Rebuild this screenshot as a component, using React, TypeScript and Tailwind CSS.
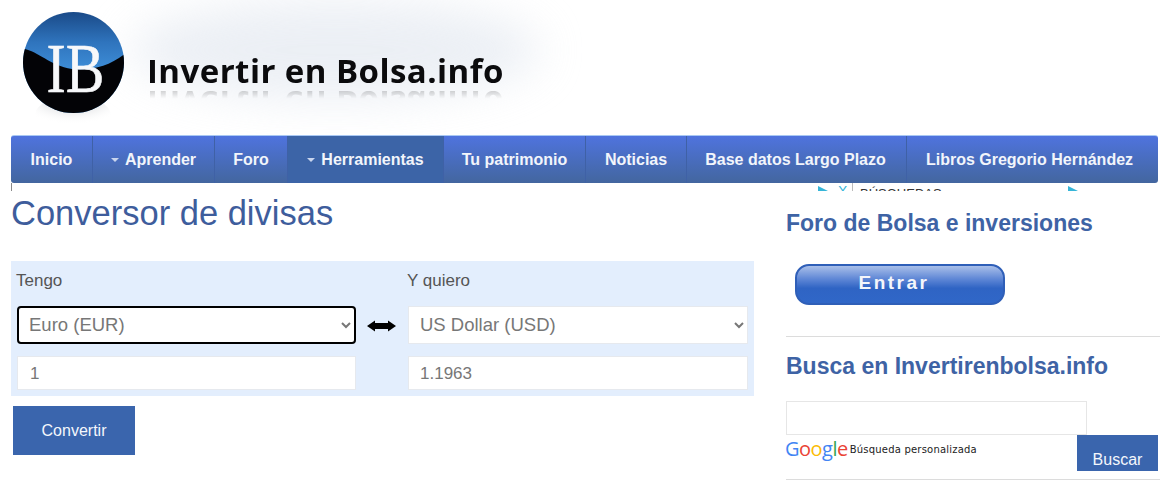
const navItems = [
  { label: "Inicio", width: "w-[82px]" },
  { label: "Aprender", width: "w-[122px]", caret: true },
  { label: "Foro", width: "w-[73px]" },
  { label: "Herramientas", width: "w-[156px]", caret: true, active: true },
  { label: "Tu patrimonio", width: "w-[142px]" },
  { label: "Noticias", width: "w-[101px]" },
  { label: "Base datos Largo Plazo", width: "w-[220px] pr-[2px]" },
  { label: "Libros Gregorio Hernández", width: "w-[251px] pr-[6px]" },
];

function LogoBall() {
  return (
    <svg width="130" height="135" viewBox="0 0 130 135" className="shrink-0">
      <defs>
        <linearGradient id="ballTop" x1="0" y1="0" x2="0" y2="1">
          <stop offset="0" stopColor="#1a4a88" />
          <stop offset="0.3" stopColor="#2f74bd" />
          <stop offset="0.6" stopColor="#3f90da" />
          <stop offset="1" stopColor="#3b86cf" />
        </linearGradient>
        <radialGradient id="ballShadow" cx="0.5" cy="0" r="0.75">
          <stop offset="0" stopColor="#9a9ea5" />
          <stop offset="1" stopColor="#ffffff" stopOpacity="0" />
        </radialGradient>
        <clipPath id="ballClip">
          <circle cx="73.5" cy="62.5" r="50.5" />
        </clipPath>
      </defs>
      <ellipse cx="73" cy="115" rx="38" ry="19" fill="url(#ballShadow)" />
      <circle cx="73.5" cy="62.5" r="50.5" fill="url(#ballTop)" />
      <g clipPath="url(#ballClip)">
        <path d="M20 48 C38 50 48 65 72 69 C92 71 110 66 126 53 L126 116 L20 116 Z" fill="#030306" />
      </g>
      <text
        transform="translate(75.5 92) scale(0.84 1)"
        textAnchor="middle"
        fontFamily="'Liberation Serif', serif"
        fontSize="69"
        fill="#f7f8fa"
        stroke="#f7f8fa"
        strokeWidth="0.6"
      >
        IB
      </text>
    </svg>
  );
}

function SwapArrow() {
  return (
    <svg width="29" height="12" viewBox="0 0 29 12" className="shrink-0">
      <path d="M0 6 L8 0.5 V3 H21 V0.5 L29 6 L21 11.5 V9 H8 V11.5 Z" fill="#000" />
    </svg>
  );
}

export default function App() {
  return (
    <div className="w-[1160px] h-[486px] overflow-hidden bg-white font-['Liberation_Sans',Arial,sans-serif]">
      {/* cabecera */}
      <header className="relative h-[135px] flex items-start overflow-hidden">
        <div className="absolute left-[130px] top-[0px] w-[410px] h-[100px] rounded-[50%] bg-[#dfe5ee] opacity-60 blur-[22px]" />
        <div className="relative">
          <LogoBall />
        </div>
        <span className="relative ml-[17px] mt-[49px] font-['Open_Sans',sans-serif] font-bold text-[33px] leading-[44px] tracking-[0.45px] text-[#0b0b0d] [-webkit-box-reflect:below_-12px_linear-gradient(transparent_60%,rgba(0,0,0,0.4))]">
          Invertir en Bolsa.info
        </span>
      </header>

      {/* menu */}
      <nav className="ml-[11px] w-[1147px] h-[48px] flex rounded-[3px] overflow-hidden border-t border-[#a9c8f3] bg-gradient-to-b from-[#4f73de] to-[#43669f]">
        {navItems.map((item) => (
          <a
            key={item.label}
            className={`${item.width} flex items-center justify-center gap-[6px] border-r border-[#3f61a6] text-[16px] font-bold text-[#f2f5fb] last:border-r-0 ${
              item.active ? "bg-[#3c64a7]" : ""
            }`}
          >
            {item.caret && <span className="w-0 h-0 border-x-[4px] border-x-transparent border-t-[4px] border-t-[#c9d5ee]" />}
            {item.label}
          </a>
        ))}
      </nav>

      {/* restos del anuncio */}
      <div className="relative ml-[11px] h-[8px] border-l border-[#8a8a8a] overflow-hidden">
        <span className="absolute left-[806px] top-[3px] w-0 h-0 border-y-[5px] border-y-transparent border-l-[10px] border-l-[#36b5d8]" />
        <span className="absolute left-[826px] top-[0px] text-[14px] leading-[16px] text-[#36b5d8]">X</span>
        <span className="absolute left-[840px] top-0 h-full border-l border-[#bbb]" />
        <span className="absolute left-[848px] top-[3px] text-[13px] leading-[15px] text-[#333]">BÚSQUEDAS</span>
        <span className="absolute left-[1056px] top-[3px] w-0 h-0 border-y-[5px] border-y-transparent border-l-[10px] border-l-[#36b5d8]" />
      </div>

      <div className="flex pl-[11px]">
        {/* conversor */}
        <main className="w-[743px] shrink-0">
          <h1 className="text-[34.5px] leading-[42px] mt-[1px] text-[#3e5d9c]">Conversor de divisas</h1>
          <div className="mt-[27px] h-[135px] bg-[#e3eefd] pl-[6px] pr-[6px] pt-[9px] flex">
            <div className="w-[339px]">
              <label className="block -ml-[1px] text-[17px] leading-[22px] text-[#555]">Tengo</label>
              <select
                defaultValue="EUR"
                className="mt-[14px] w-full h-[38px] pl-[6px] pr-[2px] pb-[2px] bg-white border-2 border-black rounded-[4px] text-[18.5px] text-[#777]"
              >
                <option value="EUR">Euro (EUR)</option>
                <option value="USD">US Dollar (USD)</option>
              </select>
              <input
                defaultValue="1"
                className="mt-[12px] w-full h-[34px] px-[12px] pt-[2px] bg-white border border-[#e6e9ee] text-[17px] text-[#777]"
              />
            </div>
            <div className="w-[52px] pt-[50px] pl-[11px]">
              <SwapArrow />
            </div>
            <div className="w-[340px]">
              <label className="block -ml-[1px] text-[17px] leading-[22px] text-[#555]">Y quiero</label>
              <select
                defaultValue="USD"
                className="mt-[14px] w-full h-[38px] pl-[7px] pr-[2px] pb-[2px] bg-white border border-[#e6e9ee] text-[18.5px] text-[#777]"
              >
                <option value="EUR">Euro (EUR)</option>
                <option value="USD">US Dollar (USD)</option>
              </select>
              <input
                defaultValue="1.1963"
                className="mt-[12px] w-full h-[34px] px-[11px] pt-[2px] bg-white border border-[#e6e9ee] text-[17px] text-[#777]"
              />
            </div>
          </div>
          <button className="mt-[10px] ml-[2px] w-[122px] h-[49px] bg-[#3a65ad] text-[16px] text-[#f4f7fc]">Convertir</button>
        </main>

        {/* lateral */}
        <aside className="ml-[32px] flex-1">
          <h2 className="mt-[18px] text-[23px] leading-[28px] font-bold text-[#3e63a5]">Foro de Bolsa e inversiones</h2>
          <a className="mt-[27px] ml-[9px] w-[210px] h-[41px] flex items-center justify-center rounded-[14px] border-2 border-[#2f5fb8] bg-[linear-gradient(#a9bfe9,#5f87d6_35%,#2f64c4_60%,#3067c8)] text-[19px] font-bold tracking-[2.5px] text-[#f4f6fb] pb-[3px] pr-[12px]">
            Entrar
          </a>
          <div className="mt-[31px] border-t border-[#dcdcdc]" />
          <h2 className="mt-[15px] text-[23px] leading-[28px] font-bold text-[#3e63a5]">Busca en Invertirenbolsa.info</h2>
          <input className="mt-[21px] block w-[301px] h-[34px] border border-[#e6e6e6] bg-white" />
          <div className="flex h-[37px] w-[372px] items-start">
            <span className="-ml-[1px] flex items-baseline font-['Open_Sans',sans-serif] font-medium text-[20px] leading-[27px] tracking-[-0.5px]">
              <span className="text-[#4285f4]">G</span>
              <span className="text-[#ea4335]">o</span>
              <span className="text-[#fbbc05]">o</span>
              <span className="text-[#4285f4]">g</span>
              <span className="text-[#34a853]">l</span>
              <span className="text-[#ea4335]">e</span>
            </span>
            <span className="ml-[2px] font-['DejaVu_Sans',sans-serif] text-[10px] tracking-[0.2px] leading-[30px] text-[#222]">Búsqueda personalizada</span>
            <button className="ml-auto w-[81px] h-[36px] pt-[14px] bg-[#3a65ad] text-[16px] leading-[22px] text-[#f4f7fc]">Buscar</button>
          </div>
          <div className="mt-[7px] border-t border-[#dcdcdc]" />
        </aside>
      </div>
    </div>
  );
}
